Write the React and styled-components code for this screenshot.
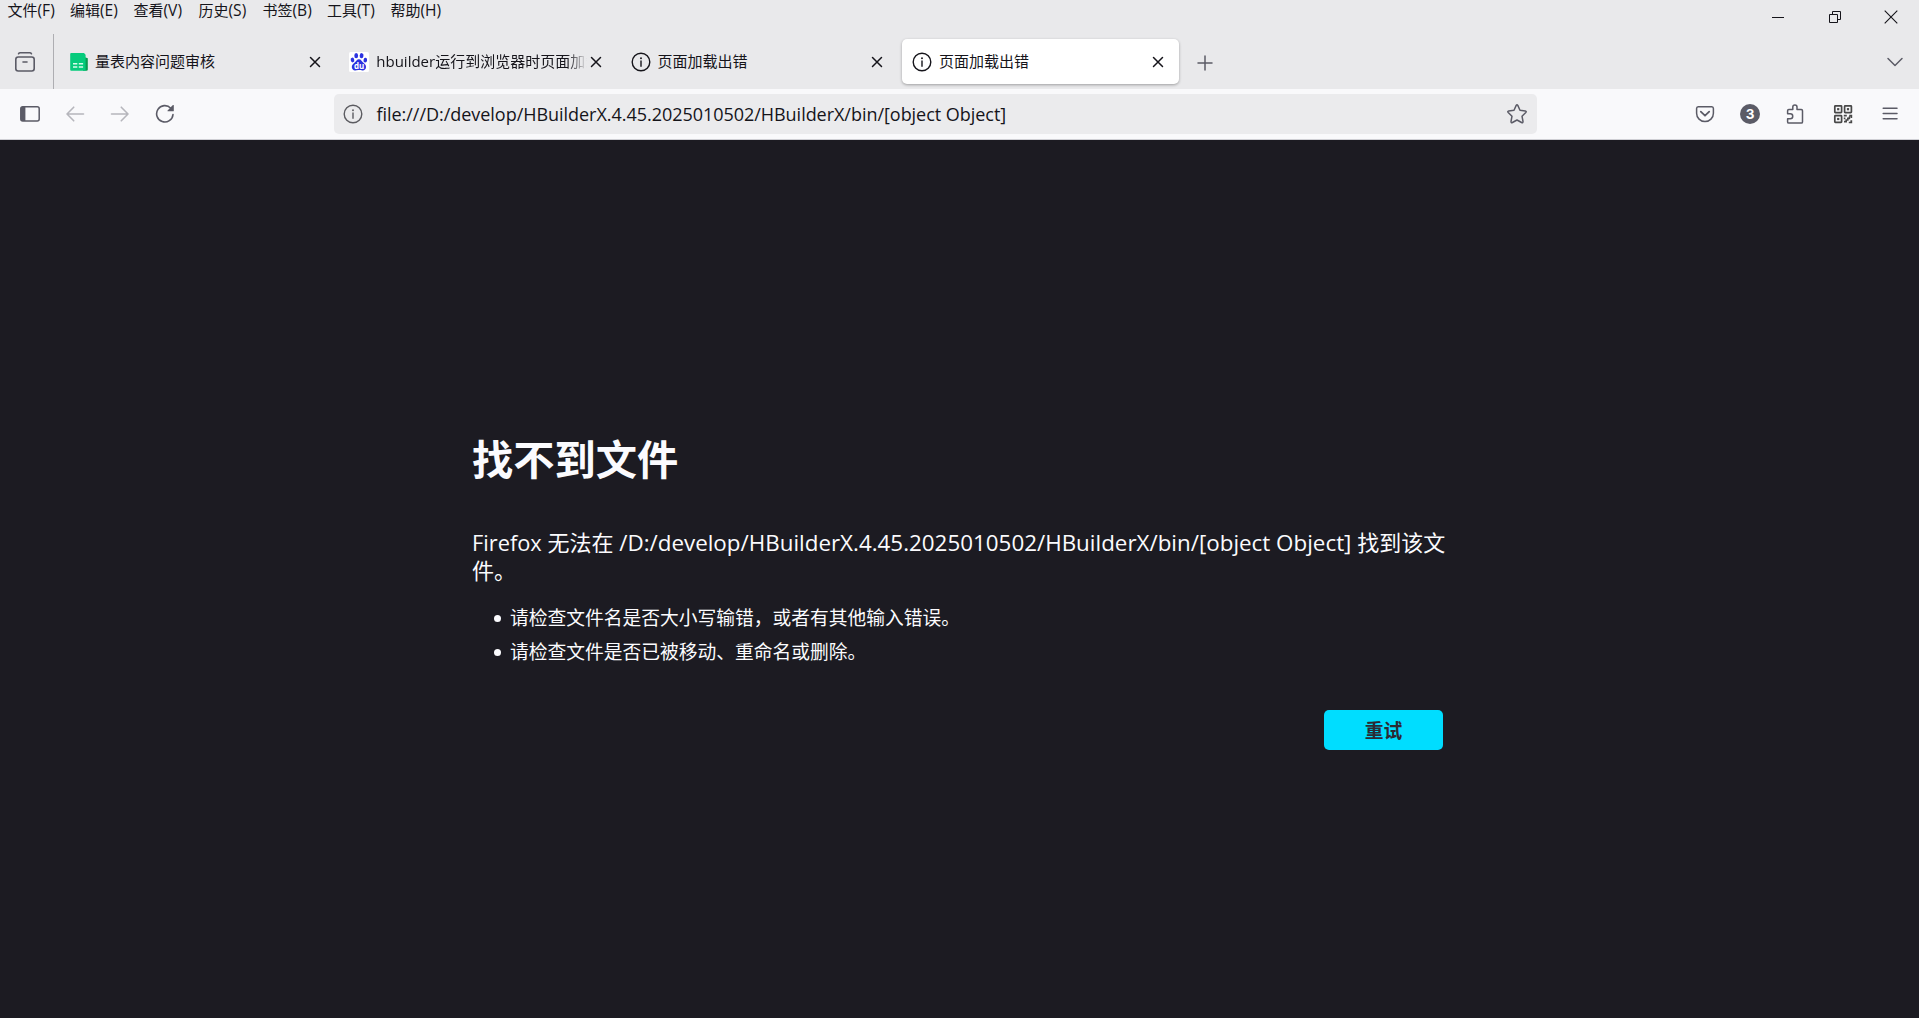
import React from 'react';
import styled, { createGlobalStyle } from 'styled-components';

const GlobalStyle = createGlobalStyle`
  * { box-sizing: border-box; }
  html, body { margin: 0; padding: 0; }
  body {
    font-family: 'Open Sans', 'Noto Sans CJK SC', sans-serif;
    color: #15141a;
    background: #1c1b22;
    overflow: hidden;
  }
  svg { display: block; flex: none; }
`;

const Window = styled.div`
  display: flex;
  flex-direction: column;
  width: 100vw;
  height: 100vh;
`;

const Chrome = styled.header`
  display: flex;
  flex-direction: column;
  height: 89px;
  background: #e9e9eb;
`;

const TitleRow = styled.div`
  display: flex;
  justify-content: space-between;
  height: 34px;
`;

const MenuBar = styled.nav`
  display: flex;
  padding-left: 7.5px;
  height: 22px;
`;

const MenuItem = styled.span`
  width: ${(p) => p.$width}px;
  font-size: 15px;
  line-height: 20px;
  white-space: nowrap;
`;

const Latin = styled.span`
  font-size: ${(p) => p.$size}px;
  line-height: 1;
`;

const WindowButtons = styled.div`
  display: flex;
`;

const WindowButton = styled.div`
  display: flex;
  align-items: center;
  justify-content: center;
  width: ${(p) => p.$width || 57}px;
  height: 34px;
`;

const TabStrip = styled.div`
  display: flex;
  align-items: stretch;
  height: 55px;
`;

const FirefoxView = styled.div`
  display: flex;
  align-items: center;
  width: 54px;
  padding-left: 15px;
  border-right: 1px solid #aeaeb2;
`;

const Tabs = styled.div`
  display: flex;
  gap: 4.3px;
  padding: 5px 0 0 4px;
`;

const Tab = styled.div`
  display: flex;
  align-items: center;
  width: 277px;
  height: 45px;
  padding: 0 14.5px 0 10px;
  border-radius: 5px;
  background: ${(p) => (p.$active ? '#ffffff' : 'transparent')};
  box-shadow: ${(p) => (p.$active ? '0 1px 3px rgba(0, 0, 0, 0.32)' : 'none')};
`;

const TabLabel = styled.span`
  flex: 1;
  min-width: 0;
  margin: 0 1px 2px 7px;
  overflow: hidden;
  white-space: nowrap;
  font-size: 15px;
  line-height: 24px;
  ${(p) => p.$fade && 'mask-image: linear-gradient(to left, transparent 2px, #000 22px);'}
`;

const NewTab = styled.div`
  display: flex;
  align-items: center;
  padding: 2px 0 0 18.5px;
`;

const AllTabs = styled.div`
  display: flex;
  align-items: center;
  margin-left: auto;
  padding-right: 15px;
`;

const Toolbar = styled.div`
  display: flex;
  align-items: center;
  height: 51px;
  padding: 0 7.5px 1px;
  background: #f9f9fb;
  border-bottom: 1px solid #cfcfd4;
`;

const ToolSlot = styled.div`
  display: flex;
  align-items: center;
  justify-content: center;
  width: ${(p) => p.$width || 45}px;
  height: 40px;
  color: #5b5b66;
  opacity: ${(p) => (p.$disabled ? 0.42 : 1)};
`;

const UrlBar = styled.div`
  display: flex;
  align-items: center;
  width: 1203px;
  height: 40px;
  margin: 0 145.5px 0 146.5px;
  padding: 0 10px 0 9px;
  border-radius: 5px;
  background: #ebebed;
`;

const Url = styled.span`
  flex: 1;
  margin-left: 13.5px;
  font-size: 18px;
  letter-spacing: -0.035px;
  line-height: 26px;
  white-space: nowrap;
`;

const Page = styled.main`
  flex: 1;
  padding: 291px 0 0 472px;
  background: #1c1b22;
  color: #fbfbfe;
`;

const ErrorPanel = styled.section`
  display: flex;
  flex-direction: column;
  width: 975px;
`;

const Heading = styled.h1`
  margin: 0;
  font-size: 41.25px;
  font-weight: 700;
  line-height: 56px;
`;

const Description = styled.p`
  margin: 41px 0 0;
  font-size: 22px;
  line-height: 28px;
`;

const Hints = styled.ul`
  margin: 17px 0 0;
  padding: 0 0 0 22px;
  font-size: 18.75px;
  list-style: none;
`;

const Hint = styled.li`
  display: flex;
  align-items: center;
  gap: 9px;
  line-height: 33.75px;

  &::before {
    content: '';
    width: 7px;
    height: 7px;
    margin-top: 2px;
    border-radius: 50%;
    background: #fbfbfe;
  }
`;

const Retry = styled.button`
  align-self: flex-end;
  width: 119px;
  height: 40px;
  margin: 41px 4px 0 0;
  padding: 0;
  border: 0;
  border-radius: 5px;
  background: #00ddff;
  color: #2b2a33;
  font: 700 18.75px/38px 'Noto Sans CJK SC', sans-serif;
`;

const stroke = (width = 1.5) => ({
  fill: 'none',
  stroke: 'currentColor',
  strokeWidth: width,
  strokeLinecap: 'round',
  strokeLinejoin: 'round',
});

const InfoIcon = ({ color }) => (
  <svg width="20" height="20" viewBox="0 0 20 20" color={color}>
    <circle cx="10" cy="10" r="8.8" {...stroke(1.4)} />
    <path d="M10 9v5.2" {...stroke(1.4)} />
    <circle cx="10" cy="6.2" r="0.95" fill="currentColor" />
  </svg>
);

const CloseIcon = () => (
  <svg width="12" height="12" viewBox="0 0 12 12">
    <path d="M1.5 1.5l9 9M10.5 1.5l-9 9" {...stroke(1.5)} />
  </svg>
);

const SheetIcon = () => (
  <svg width="20" height="20" viewBox="0 0 20 20">
    <path d="M16 5l3.800 1.200V17.200a1.400 1.400 0 0 1-1.400 1.600H15z" fill="#0a9a50" />
    <path d="M3.200 1h12.800l1.600 1.800v16H3.200A1 1 0 0 1 2.200 17.800V2A1 1 0 0 1 3.200 1z" fill="#06cb7c" />
    <path d="M5 11.800h4.300M10.800 11.800h4.300M5 15h4.300M10.800 15h4.300" stroke="#d9fbe9" strokeWidth="1.600" />
  </svg>
);

const DuText = styled.text`
  font: 700 8px 'Open Sans', sans-serif;
  fill: #ffffff;
`;

const BaiduIcon = () => (
  <svg width="20" height="20" viewBox="0 0 20 20">
    <rect width="20" height="20" rx="1.5" fill="#ffffff" />
    <g fill="#2b32e0">
      <ellipse cx="7.2" cy="3.700" rx="1.900" ry="2.600" />
      <ellipse cx="12.600" cy="3.700" rx="1.900" ry="2.600" transform="rotate(8 12.6 3.7)" />
      <ellipse cx="3.500" cy="8" rx="1.800" ry="2.400" transform="rotate(-12 3.5 8)" />
      <ellipse cx="16.300" cy="8.200" rx="1.800" ry="2.400" transform="rotate(8 16.3 8.2)" />
      <path d="M9.900 7.300c2.200 0 2.800 2 4.200 3.300 1.500 1.300 3.200 2.500 2.900 4.700-.3 2.300-1.800 3.300-3.600 3.100-1.300-.1-2-.4-3.500-.4s-2.200.3-3.500.4c-1.800.2-3.400-.9-3.600-3.100-.2-2.200 1.500-3.400 2.900-4.700C7.200 9.300 7.800 7.300 9.900 7.300z" />
    </g>
    <DuText x="4.900" y="16.800">du</DuText>
  </svg>
);

const ViewIcon = () => (
  <svg width="20" height="20" viewBox="0 0 20 20" color="#5b5b66">
    <path d="M3.500 1.800Q4 .8 5.200.8h9.600q1.200 0 1.700 1" {...stroke(1.5)} />
    <rect x=".8" y="5" width="18.400" height="14" rx="2.400" {...stroke(1.6)} />
    <path d="M8 10h4" {...stroke(1.6)} />
  </svg>
);

const SidebarIcon = () => (
  <svg width="20" height="20" viewBox="0 0 20 20">
    <rect x=".8" y="2.800" width="18.400" height="14.200" rx="2" {...stroke(1.5)} />
    <path d="M2.500 2.800H5.400V17H2.500A1.700 1.700 0 0 1 .8 15.300V4.500A1.700 1.700 0 0 1 2.500 2.800z" fill="currentColor" />
  </svg>
);

const ArrowIcon = ({ forward }) => (
  <svg width="20" height="20" viewBox="0 0 20 20">
    <path
      d={forward ? 'M1.500 10h16.500M11.300 3.200L18 10l-6.700 6.800' : 'M18.500 10H2M8.700 3.200L2 10l6.700 6.800'}
      {...stroke(1.6)}
    />
  </svg>
);

const ReloadIcon = () => (
  <svg width="20" height="20" viewBox="0 0 20 20">
    <path d="M18 10.500A8.200 8.200 0 1 1 15.800 4.200" {...stroke(1.6)} />
    <path d="M18.800 1.400v5.300a.6.6 0 0 1-.6.6h-5.300c-.4 0-.6-.5-.3-.8l5.300-5.400c.3-.3.9-.1.900.3z" fill="currentColor" />
  </svg>
);

const StarIcon = () => (
  <svg width="20" height="20" viewBox="0 0 20 20" color="#5b5b66">
    <path
      d="M9.200 1.400q.8-1.300 1.600 0l2.200 4.900 5.300.7q1.500.4.500 1.500l-3.800 3.700 1 5.300q0 1.600-1.400 1L10 16l-4.600 2.500q-1.400.6-1.400-1l1-5.300L1.200 8.500q-1-1.100.5-1.500L7 6.300z"
      {...stroke(1.5)}
    />
  </svg>
);

const PocketIcon = () => (
  <svg width="20" height="20" viewBox="0 0 20 20">
    <path d="M3.200 2.800h13.600A1.700 1.700 0 0 1 18.400 4.500v4.700a8.400 8.400 0 0 1-16.800 0V4.500A1.700 1.700 0 0 1 3.200 2.800z" {...stroke(1.5)} />
    <path d="M5.800 7.600L10 11.700l4.200-4.100" {...stroke(1.8)} />
  </svg>
);

const CountBadge = styled.span`
  display: flex;
  align-items: center;
  justify-content: center;
  width: 20px;
  height: 20px;
  border-radius: 50%;
  background: #5b5b66;
  color: #ffffff;
  font: 700 13.5px/20px Inter, sans-serif;
`;

const PuzzleIcon = () => (
  <svg width="20" height="20" viewBox="0 0 20 20">
    <path
      d="M2.600 9.800V6.700q0-1.200 1.200-1.200H7.800V3a2.100 2.100 0 0 1 4.200 0v2.500h4.300q1.200 0 1.200 1.200v11.200q0 1.200-1.200 1.200H3.800q-1.200 0-1.200-1.200V14.700h2.700a2.450 2.450 0 0 0 0-4.900z"
      {...stroke(1.5)}
    />
  </svg>
);

const QrIcon = () => (
  <svg width="20" height="20" viewBox="0 0 20 20" color="#484848">
    {[[1.8, 1.8], [11.600, 1.8], [1.8, 11.600]].map(([x, y]) => (
      <g key={`${x}-${y}`}>
        <rect x={x} y={y} width="6.800" height="6.800" rx=".6" {...stroke(1.7)} />
        <rect x={x + 2.300} y={y + 2.300} width="2.200" height="2.200" fill="currentColor" />
      </g>
    ))}
    <path
      d="M10.800 10.800h3v1.600h-3zM16.200 10.800h3v3.200h-1.600v-1.600h-1.400zM10.800 13.600h1.600v1.600h-1.600zM12.400 15.200h1.600v-1.600h1.600v-1.200h1.600v2.800h-1.600v1.600h-1.600v1.600h-3v-1.600h1.400zM15.800 17.800h1.600v-1.600h1.800v3h-3.400z"
      fill="currentColor"
    />
  </svg>
);

const MenuIcon = () => (
  <svg width="20" height="20" viewBox="0 0 20 20">
    <path d="M3.200 4.300h13.800M3.200 9.600h13.800M3.200 14.800h13.800" {...stroke(1.5)} />
  </svg>
);

const menus = [
  ['文件', '(F)', 62.5],
  ['编辑', '(E)', 63.5],
  ['查看', '(V)', 65],
  ['历史', '(S)', 64],
  ['书签', '(B)', 64.5],
  ['工具', '(T)', 63.5],
  ['帮助', '(H)', 60],
];

const tabs = [
  { icon: <SheetIcon />, label: '量表内容问题审核' },
  {
    icon: <BaiduIcon />,
    label: (
      <>
        <Latin $size={15}>hbuilder</Latin>运行到浏览器时页面加载
      </>
    ),
    fade: true,
  },
  { icon: <InfoIcon color="#15141a" />, label: '页面加载出错' },
  { icon: <InfoIcon color="#15141a" />, label: '页面加载出错', active: true },
];

export default function App() {
  return (
    <Window>
      <GlobalStyle />
      <Chrome>
        <TitleRow>
          <MenuBar>
            {menus.map(([name, key, width]) => (
              <MenuItem key={name} $width={width}>
                {name}
                <Latin $size={15.6}>{key}</Latin>
              </MenuItem>
            ))}
          </MenuBar>
          <WindowButtons>
            <WindowButton>
              <svg width="12" height="13" viewBox="0 0 12 13"><path d="M0 6.5h12" stroke="#15141a" /></svg>
            </WindowButton>
            <WindowButton>
              <svg width="12" height="12" viewBox="0 0 12 12" fill="none" stroke="#15141a">
                <path d="M.5 3.5h8v8h-8zM3.5 3.5v-3h8v8h-3" />
              </svg>
            </WindowButton>
            <WindowButton $width={56}>
              <svg width="14" height="14" viewBox="0 0 14 14" fill="none" stroke="#15141a" strokeWidth="1.1">
                <path d="M.7.7l12.600 12.600M13.300.7L.7 13.300" />
              </svg>
            </WindowButton>
          </WindowButtons>
        </TitleRow>
        <TabStrip>
          <FirefoxView><ViewIcon /></FirefoxView>
          <Tabs>
            {tabs.map((tab, i) => (
              <Tab key={i} $active={tab.active}>
                {tab.icon}
                <TabLabel $fade={tab.fade}>{tab.label}</TabLabel>
                <CloseIcon />
              </Tab>
            ))}
          </Tabs>
          <NewTab>
            <svg width="16" height="16" viewBox="0 0 16 16" color="#5b5b66">
              <path d="M8 1v14M1 8h14" {...stroke(1.5)} />
            </svg>
          </NewTab>
          <AllTabs>
            <svg width="18" height="10" viewBox="0 0 18 10" color="#5b5b66">
              <path d="M2 1.500l7 7 7-7" {...stroke(1.5)} />
            </svg>
          </AllTabs>
        </TabStrip>
      </Chrome>
      <Toolbar>
        <ToolSlot><SidebarIcon /></ToolSlot>
        <ToolSlot $disabled><ArrowIcon /></ToolSlot>
        <ToolSlot $disabled><ArrowIcon forward /></ToolSlot>
        <ToolSlot><ReloadIcon /></ToolSlot>
        <UrlBar>
          <InfoIcon color="#5b5b60" />
          <Url>file:///D:/develop/HBuilderX.4.45.2025010502/HBuilderX/bin/[object Object]</Url>
          <StarIcon />
        </UrlBar>
        <ToolSlot><PocketIcon /></ToolSlot>
        <ToolSlot><CountBadge>3</CountBadge></ToolSlot>
        <ToolSlot><PuzzleIcon /></ToolSlot>
        <ToolSlot $width={51}><QrIcon /></ToolSlot>
        <ToolSlot $width={43}><MenuIcon /></ToolSlot>
      </Toolbar>
      <Page>
        <ErrorPanel>
          <Heading>找不到文件</Heading>
          <Description>
            <Latin $size={21.8}>Firefox</Latin> 无法在{' '}
            <Latin $size={22.38}>/D:/develop/HBuilderX.4.45.2025010502/HBuilderX/bin/[object Object]</Latin> 找到该文件。
          </Description>
          <Hints>
            <Hint>请检查文件名是否大小写输错，或者有其他输入错误。</Hint>
            <Hint>请检查文件是否已被移动、重命名或删除。</Hint>
          </Hints>
          <Retry>重试</Retry>
        </ErrorPanel>
      </Page>
    </Window>
  );
}
